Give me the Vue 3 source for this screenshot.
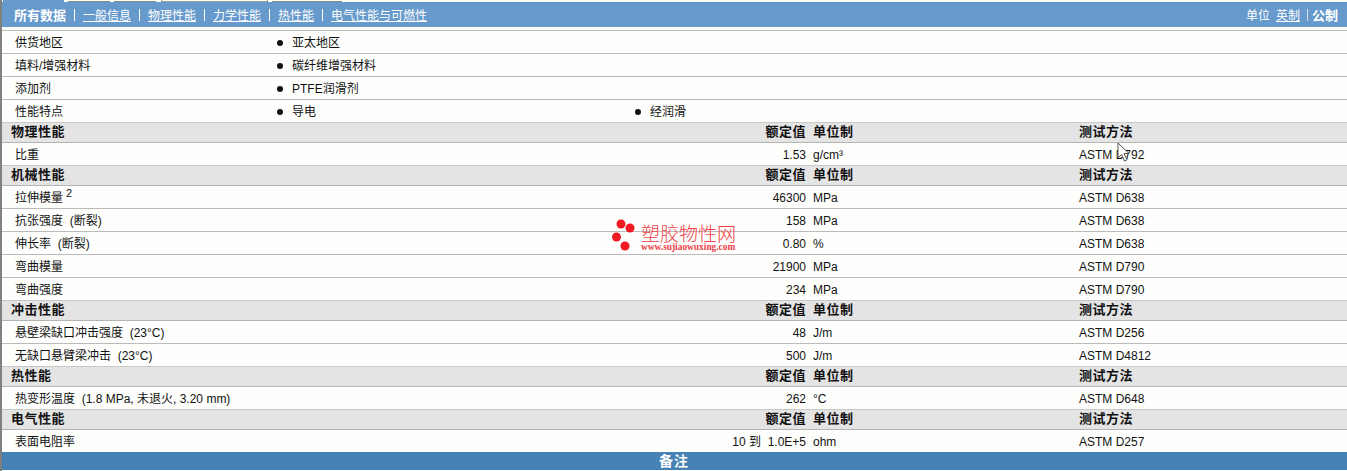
<script setup>
const sections = [
  { title: '物理性能', rows: [{ name: '比重', value: '1.53', unit: 'g/cm³', method: 'ASTM D792' }] },
  { title: '机械性能', rows: [
    { name: '拉伸模量', sup: '2', value: '46300', unit: 'MPa', method: 'ASTM D638' },
    { name: '抗张强度  (断裂)', value: '158', unit: 'MPa', method: 'ASTM D638' },
    { name: '伸长率  (断裂)', value: '0.80', unit: '%', method: 'ASTM D638' },
    { name: '弯曲模量', value: '21900', unit: 'MPa', method: 'ASTM D790' },
    { name: '弯曲强度', value: '234', unit: 'MPa', method: 'ASTM D790' }
  ] },
  { title: '冲击性能', rows: [
    { name: '悬壁梁缺口冲击强度  (23°C)', value: '48', unit: 'J/m', method: 'ASTM D256' },
    { name: '无缺口悬臂梁冲击  (23°C)', value: '500', unit: 'J/m', method: 'ASTM D4812' }
  ] },
  { title: '热性能', rows: [{ name: '热变形温度  (1.8 MPa, 未退火, 3.20 mm)', value: '262', unit: '°C', method: 'ASTM D648' }] },
  { title: '电气性能', rows: [{ name: '表面电阻率', value: '10 到  1.0E+5', unit: 'ohm', method: 'ASTM D257' }] }
]
const general = [
  { label: '供货地区', items: ['亚太地区'] },
  { label: '填料/增强材料', items: ['碳纤维增强材料'] },
  { label: '添加剂', items: ['PTFE润滑剂'] },
  { label: '性能特点', items: ['导电', '经润滑'] }
]
const nav = ['一般信息', '物理性能', '力学性能', '热性能', '电气性能与可燃性']
</script>

<template>
  <div class="page">
    <div class="tabs"><i></i><i></i><i></i><i></i><i></i></div>
    <div class="bar">
      <div class="nav">
        <b class="strong">所有数据</b>
        <template v-for="n in nav" :key="n"><span class="sep"></span><a>{{ n }}</a></template>
      </div>
      <div class="units"><span>单位</span><a class="imperial">英制</a><span class="sep small"></span><b class="strong">公制</b></div>
    </div>
    <div class="genlist">
      <div class="gen" v-for="g in general" :key="g.label">
        <div class="glabel">{{ g.label }}</div>
        <div class="gitem" v-for="it in g.items" :key="it"><span class="dot"></span>{{ it }}</div>
      </div>
    </div>
    <template v-for="s in sections" :key="s.title">
      <div class="head grid">
        <div class="htitle">{{ s.title }}</div><div class="val">额定值</div><div class="unit">单位制</div><div class="meth">测试方法</div>
      </div>
      <div class="row grid" v-for="r in s.rows" :key="r.name">
        <div class="name">{{ r.name }}<sup v-if="r.sup">{{ r.sup }}</sup></div>
        <div class="val">{{ r.value }}</div><div class="unit">{{ r.unit }}</div><div class="meth">{{ r.method }}</div>
      </div>
    </template>
    <div class="foot">备注</div>
    <div class="logo">
      <svg width="26" height="34" viewBox="0 0 26 34"><circle cx="9" cy="6" r="4.5" fill="#f01a22"/><circle cx="18" cy="10" r="4.5" fill="#f01a22"/><circle cx="4.500" cy="19" r="4.5" fill="#f01a22"/><circle cx="13" cy="28" r="4.5" fill="#f01a22"/></svg>
      <div class="ltext"><div class="lcn">塑胶物性网</div><div class="len">www.sujiaowuxing.com</div></div>
    </div>
    <svg class="cursor" width="14" height="22" viewBox="0 0 14 22"><path d="M1 1v15l3.500-3.500 3 6.500 2.500-1-3-6.500h5z" fill="#fff" stroke="#555" stroke-width="1"/></svg>
  </div>
</template>

<style>
html, body { margin: 0; background: #fff; }
</style>
<style scoped>
.page { position: relative; width: 1347px; height: 471px; overflow: hidden; box-sizing: border-box; border-left: 2px solid #808080; background: #fefffd; font: 12px "Liberation Sans", "Noto Sans CJK SC", sans-serif; color: #111; }
.tabs { display: flex; height: 2px; gap: 4px; margin-left: 1px; }
.tabs i { display: block; width: 42px; border-bottom: 1px solid #888; box-sizing: border-box; }
.tabs i:first-child { width: 61px; background: #69c; border: 0; }
.tabs i:nth-child(4) { width: 107px; border: 1px solid #999; border-top: 0; margin-left: 1px; }
.tabs i:nth-child(5) { width: 70px; }
.bar { height: 25px; background: #6699cc; display: flex; justify-content: space-between; align-items: center; padding: 0 9px 0 12px; color: #fff; }
.nav, .units { display: flex; align-items: center; white-space: pre; }
.bar a { text-decoration: underline; }
.strong { font-size: 13px; }
.imperial { margin-left: 6px; }
.sep { display: inline-block; width: 1px; height: 12px; background: #fff; margin: 0 8px; }
.sep.small { margin: 0 4px 0 7px; background: #dde; }
.genlist { padding-top: 3px; }
.gen { height: 23px; box-sizing: border-box; border-top: 1px solid #bbb; display: flex; align-items: center; padding: 1px 0 0 13px; line-height: 16px; }
.glabel { width: 262px; }
.gitem { width: 358px; display: flex; align-items: center; }
.dot { width: 6px; height: 6px; border-radius: 50%; background: #111; margin-right: 9px; }
.grid { display: grid; grid-template-columns: 1fr 90px 273px 268px; align-items: center; line-height: 16px; }
.head { height: 21px; box-sizing: border-box; border-top: 1px solid #c8c8c8; border-bottom: 1px solid #b4b4b4; background: #e4e4e4; font-size: 13px; font-weight: 700; letter-spacing: .5px; padding-bottom: 1px; }
.row { height: 23px; box-sizing: border-box; border-top: 1px solid #bbb; }
.head + .row { height: 22px; border-top: 0; }
.htitle { padding-left: 9px; }
.name { padding: 1px 0 0 13px; white-space: pre; }
.row .val, .row .unit, .row .meth { padding-top: 1px; white-space: pre; }
.val { text-align: right; }
.unit { padding-left: 7px; }
.foot { height: 18px; background: #4682b4; color: #fff; font-size: 14px; font-weight: 700; letter-spacing: 1px; line-height: 18px; padding-left: 657px; }
.logo { position: absolute; left: 610px; top: 218px; display: flex; gap: 3px; color: #f0424c; }
.ltext { margin-top: 5px; }
.lcn { font: 300 19px/19px "Noto Sans CJK SC", sans-serif; }
.len { font: 700 9.4px/10px "Liberation Serif", serif; }
sup { font-size: 11px; line-height: 0; margin-left: 3px; position: relative; top: 0; }
.cursor { position: absolute; left: 1115px; top: 142px; }
</style>
